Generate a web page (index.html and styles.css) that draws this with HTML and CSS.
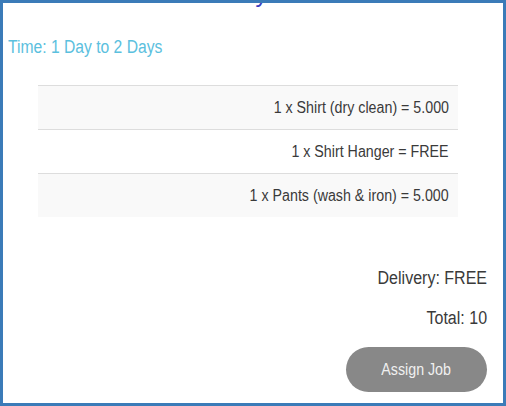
FILE: index.html
```html
<!DOCTYPE html>
<html>
<head>
<meta charset="utf-8">
<link rel="stylesheet" href="styles.css">
</head>
<body>
<div class="frame">
  <h2 class="title">Dry Clean</h2>
  <p class="time"><span class="cond left">Time: 1 Day to 2 Days</span></p>
  <div class="items">
    <div class="row odd"><span class="cond">1 x Shirt (dry clean) = 5.000</span></div>
    <div class="row"><span class="cond">1 x Shirt Hanger = FREE</span></div>
    <div class="row odd"><span class="cond">1 x Pants (wash &amp; iron) = 5.000</span></div>
  </div>
  <div class="summary">
    <p class="line delivery"><span class="cond">Delivery: FREE</span></p>
    <p class="line total"><span class="cond">Total: 10</span></p>
    <button class="assign"><span class="cond mid">Assign Job</span></button>
  </div>
</div>
</body>
</html>
```

FILE: styles.css
```css
html, body {
  margin: 0;
  padding: 0;
  background: #ffffff;
}

.frame {
  box-sizing: border-box;
  width: 506px;
  height: 406px;
  border: 3px solid #3b7bb8;
  padding: 0 16px 0 5px;
  overflow: hidden;
  font-family: "Liberation Sans", Arial, sans-serif;
  color: #3a3a3a;
}

.cond {
  display: inline-block;
  white-space: nowrap;
  transform: scaleX(0.89);
  transform-origin: right center;
}

.cond.left {
  transform: scaleX(0.87);
  transform-origin: left center;
}

.cond.mid {
  transform-origin: center center;
}

.title {
  margin: -23px 0 0;
  padding-left: 72px;
  font-size: 24px;
  line-height: 28px;
  font-weight: normal;
  color: #3d3dbd;
  text-align: center;
}

.time {
  margin: 29px 0 0;
  font-size: 18px;
  line-height: 20px;
  color: #5bc0de;
}

.items {
  width: 420px;
  margin: 28px auto 0;
}

.row {
  box-sizing: border-box;
  height: 44px;
  border-top: 1px solid #dddddd;
  padding: 0 9px 0 0;
  display: flex;
  align-items: center;
  justify-content: flex-end;
  font-size: 16px;
}

.row.odd {
  background: #f9f9f9;
}

.summary {
  display: flex;
  flex-direction: column;
  align-items: flex-end;
  margin-top: 51px;
}

.line {
  margin: 0;
  font-size: 18px;
  line-height: 20px;
}

.total {
  margin-top: 20px;
}

.assign {
  margin-top: 19px;
  width: 141px;
  height: 45px;
  padding: 0;
  border: none;
  border-radius: 23px;
  background: #888888;
  color: #f0f0f0;
  font-family: "Liberation Sans", Arial, sans-serif;
  font-size: 16px;
}
```
